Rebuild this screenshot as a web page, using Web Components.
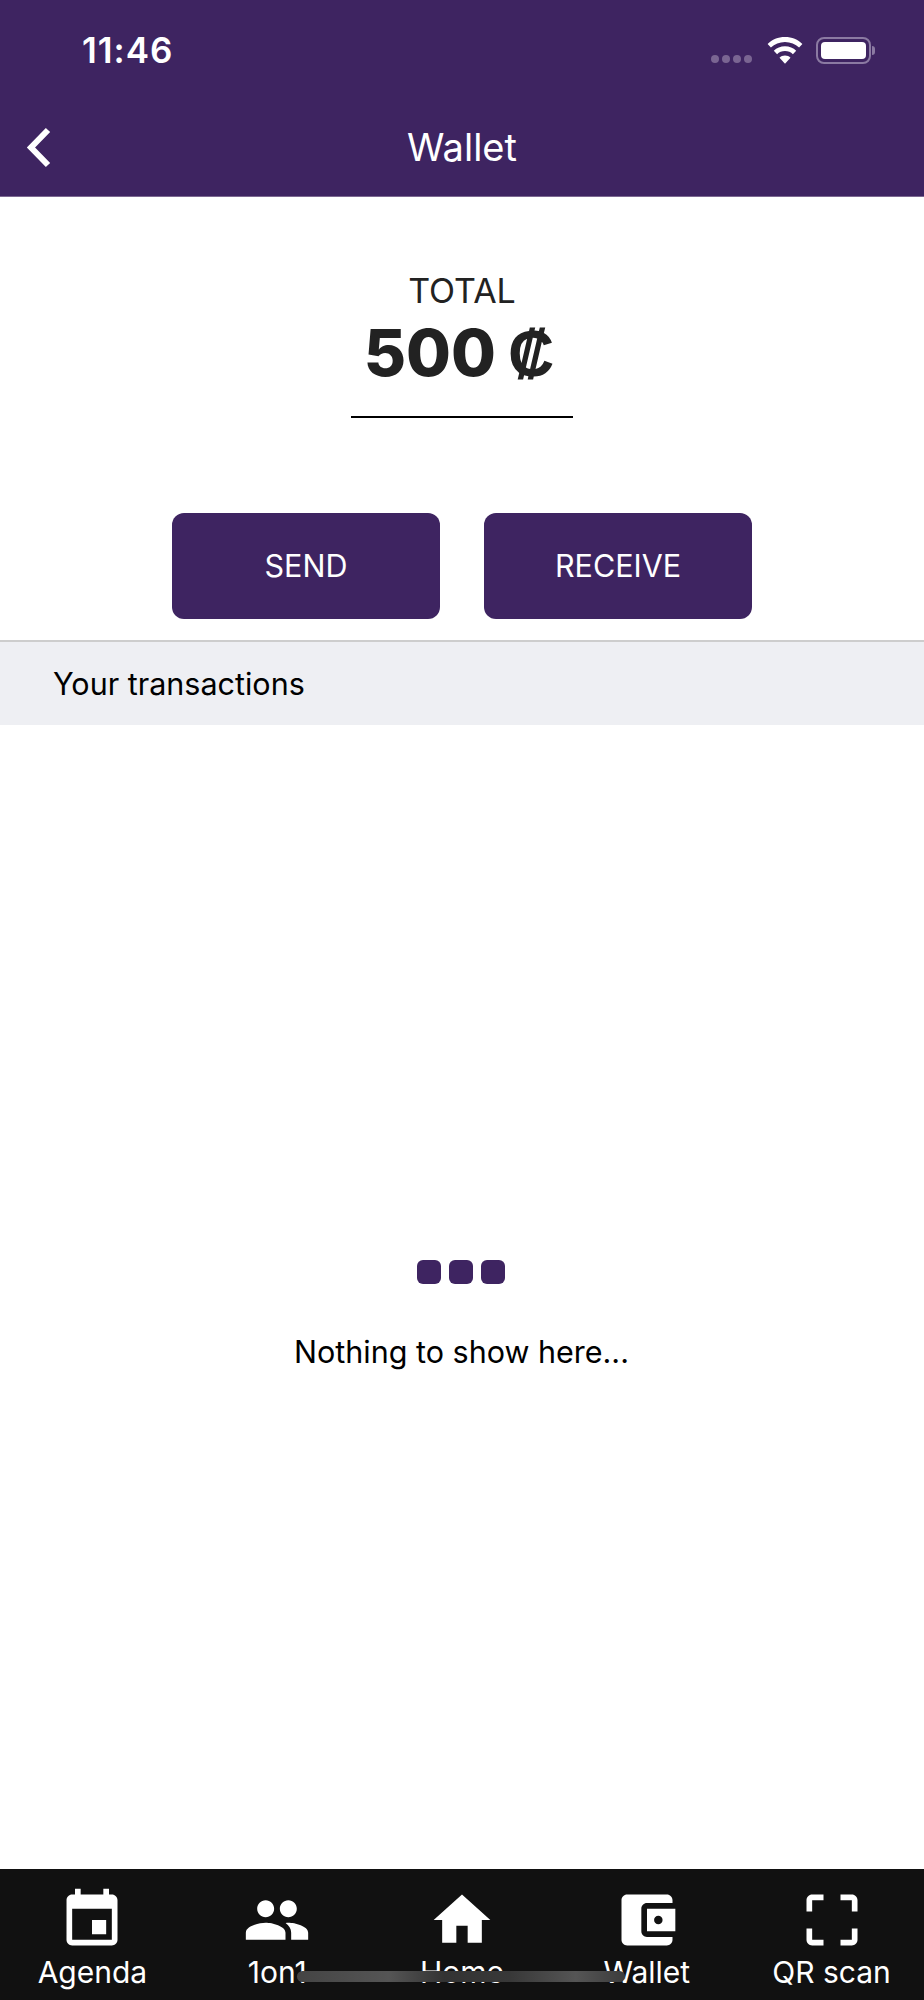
<!DOCTYPE html>
<html lang="en">
<head>
<meta charset="utf-8">
<title>Wallet</title>
<style>
	html, body {
		margin: 0;
		height: 2000px;
		background: #fff;
		font-family: "Inter", "Liberation Sans", sans-serif;
		overflow: hidden;
	}

	body {
		display: flex;
		flex-direction: column;
		position: relative;
	}

	empty-state {
		flex: 1;
	}
</style>
</head>
<body>
	<app-header title-text="Wallet"></app-header>
	<wallet-total amount="500" currency="₡"></wallet-total>
	<button-row>
		<wallet-button>SEND</wallet-button>
		<wallet-button>RECEIVE</wallet-button>
	</button-row>
	<section-bar>Your transactions</section-bar>
	<empty-state>Nothing to show here...</empty-state>
	<tab-bar>
		<tab-item icon="event">Agenda</tab-item>
		<tab-item icon="people">1on1</tab-item>
		<tab-item icon="home">Home</tab-item>
		<tab-item icon="wallet">Wallet</tab-item>
		<tab-item icon="scan">QR scan</tab-item>
	</tab-bar>
	<home-indicator></home-indicator>

<script>
	const ICONS = {
		event: "M17 12h-5v5h5v-5zM16 1v2H8V1H6v2H5c-1.11 0-1.99.9-1.99 2L3 19c0 1.1.89 2 2 2h14c1.1 0 2-.9 2-2V5c0-1.1-.9-2-2-2h-1V1h-2zm3 18H5V8h14v11z",
		people: "M16 11c1.66 0 2.99-1.34 2.99-3S17.66 5 16 5c-1.66 0-3 1.34-3 3s1.34 3 3 3zm-8 0c1.66 0 2.99-1.34 2.99-3S9.66 5 8 5C6.34 5 5 6.34 5 8s1.34 3 3 3zm0 2c-2.33 0-7 1.17-7 3.5V19h14v-2.5c0-2.33-4.67-3.5-7-3.5zm8 0c-.29 0-.62.02-.97.05 1.16.84 1.97 1.97 1.97 3.45V19h6v-2.5c0-2.33-4.67-3.5-7-3.5z",
		home: "M10 20v-6h4v6h5v-8h3L12 3 2 12h3v8z",
		wallet: "M21 18v1c0 1.1-.9 2-2 2H5c-1.11 0-2-.9-2-2V5c0-1.1.89-2 2-2h14c1.1 0 2 .9 2 2v1h-9c-1.11 0-2 .9-2 2v8c0 1.1.89 2 2 2h9zm-9-2h10V8H12v8zm4-2.5c-.83 0-1.5-.67-1.5-1.5s.67-1.5 1.5-1.5 1.5.67 1.5 1.5-.67 1.5-1.5 1.5z",
		scan: "M3 5v4h2V5h4V3H5c-1.1 0-2 .9-2 2zm2 10H3v4c0 1.1.9 2 2 2h4v-2H5v-4zm14 4h-4v2h4c1.1 0 2-.9 2-2v-4h-2v4zm0-16h-4v2h4v4h2V5c0-1.1-.9-2-2-2z",
	};

	class AppHeader extends HTMLElement {
		connectedCallback() {
			this.attachShadow({ mode: "open" });
			this.shadowRoot.innerHTML = /* HTML */ `
				<div class="status">
					<span class="time">11:46</span>
					<div class="signals">
						<div class="dots"><i></i><i></i><i></i><i></i></div>
						<svg width="36" height="27" viewBox="0 0 36 27" fill="#fff">
							<path d="M18 0C11 0 5 2.6 .6 7l3.300 3.600C7.600 7 12.500 4.900 18 4.900s10.400 2.100 14.100 5.700L35.400 7C31 2.600 25 0 18 0z"/>
							<path d="M18 9.200c-4.400 0-8.300 1.700-11.200 4.500l3.300 3.600c2-2 4.800-3.200 7.900-3.200s5.900 1.200 7.900 3.200l3.300-3.600C26.300 10.900 22.400 9.200 18 9.200z"/>
							<path d="M18 18.400c-2.200 0-4.100.9-5.500 2.300L18 26.700l5.500-6C22.100 19.300 20.200 18.400 18 18.400z"/>
						</svg>
						<div class="battery"><b></b></div>
						<div class="nub"></div>
					</div>
				</div>
				<div class="bar">
					<svg class="back" width="30" height="46" viewBox="0 0 30 46">
						<path d="M24 5 7 22.500 24 40" fill="none" stroke="#fff" stroke-width="6"/>
					</svg>
					<span class="title">${this.getAttribute("title-text")}</span>
				</div>

				<style>
					:host {
						display: block;
						background: #3e2461;
						color: #fff;
						height: 197px;
						box-sizing: border-box;
						border-bottom: 1px solid #7c6891;
					}

					.status {
						display: flex;
						justify-content: space-between;
						align-items: center;
						height: 100px;
						padding: 0 49px 0 82px;
					}

					.time {
						font-size: 35px;
						font-weight: 600;
						letter-spacing: 1px;
					}

					.signals {
						display: flex;
						align-items: center;
					}

					.dots {
						display: flex;
						gap: 3px;
						margin: 18px 15px 0 0;
					}

					.dots i {
						width: 8px;
						height: 8px;
						border-radius: 50%;
						background: #7a6592;
					}

					.battery {
						box-sizing: border-box;
						width: 55px;
						height: 27px;
						margin-left: 13px;
						padding: 3px;
						border: 2px solid #8b7aa2;
						border-radius: 8px;
					}

					.battery b {
						display: block;
						height: 100%;
						background: #fff;
						border-radius: 4px;
					}

					.nub {
						width: 3px;
						height: 9px;
						margin-left: 1px;
						background: #8b7aa2;
						border-radius: 0 3px 3px 0;
					}

					.bar {
						display: flex;
						align-items: center;
						justify-content: center;
						height: 94px;
						position: relative;
					}

					.back {
						position: absolute;
						left: 24px;
						top: 25px;
					}

					.title {
						font-size: 38px;
					}
				</style>
			`;
		}
	}

	class WalletTotal extends HTMLElement {
		connectedCallback() {
			this.attachShadow({ mode: "open" });
			this.shadowRoot.innerHTML = /* HTML */ `
				<div class="box">
					<div class="label">TOTAL</div>
					<div class="amount">${this.getAttribute("amount")}<span>${this.getAttribute("currency")}</span></div>
				</div>

				<style>
					:host {
						display: flex;
						justify-content: center;
						padding-top: 72px;
					}

					.box {
						width: 222px;
						height: 147px;
						border-bottom: 2px solid #000;
						text-align: center;
						color: #222;
					}

					.label {
						font-size: 34px;
						line-height: 44px;
					}

					.amount {
						font-weight: 800;
						font-size: 65px;
						line-height: 80px;
					}

					.amount span {
						font-family: "Liberation Sans", Arial, sans-serif;
						font-weight: 700;
						font-size: 64px;
						margin: 0 6px 0 12px;
					}
				</style>
			`;
		}
	}

	class ButtonRow extends HTMLElement {
		connectedCallback() {
			this.attachShadow({ mode: "open" });
			this.shadowRoot.innerHTML = /* HTML */ `
				<slot></slot>
				<style>
					:host {
						display: flex;
						justify-content: center;
						gap: 44px;
						padding: 95px 0 21px;
					}
				</style>
			`;
		}
	}

	class WalletButton extends HTMLElement {
		connectedCallback() {
			this.attachShadow({ mode: "open" });
			this.shadowRoot.innerHTML = /* HTML */ `
				<slot></slot>
				<style>
					:host {
						display: flex;
						align-items: center;
						justify-content: center;
						box-sizing: border-box;
						width: 268px;
						height: 106px;
						padding-bottom: 2px;
						background: #3e2461;
						border-radius: 12px;
						color: #fff;
						font-size: 30.500px;
					}
				</style>
			`;
		}
	}

	class SectionBar extends HTMLElement {
		connectedCallback() {
			this.attachShadow({ mode: "open" });
			this.shadowRoot.innerHTML = /* HTML */ `
				<slot></slot>
				<style>
					:host {
						display: flex;
						align-items: center;
						height: 85px;
						box-sizing: border-box;
						padding-left: 53px;
						background: #eeeff3;
						border-top: 2px solid #cdcdcd;
						color: #000;
						font-size: 30.500px;
					}
				</style>
			`;
		}
	}

	class EmptyState extends HTMLElement {
		connectedCallback() {
			this.attachShadow({ mode: "open" });
			this.shadowRoot.innerHTML = /* HTML */ `
				<div class="dots"><i></i><i></i><i></i></div>
				<div class="text"><slot></slot></div>
				<style>
					:host {
						display: flex;
						flex-direction: column;
						align-items: center;
						padding-top: 535px;
						box-sizing: border-box;
						color: #000;
						font-size: 30.500px;
					}

					.dots {
						display: flex;
						gap: 8px;
						margin-right: 2px;
					}

					.dots i {
						width: 24px;
						height: 24px;
						border-radius: 6px;
						background: #3e2461;
					}

					.text {
						margin-top: 49px;
						margin-right: 1px;
					}
				</style>
			`;
		}
	}

	class TabBar extends HTMLElement {
		connectedCallback() {
			this.attachShadow({ mode: "open" });
			this.shadowRoot.innerHTML = /* HTML */ `
				<slot></slot>
				<style>
					:host {
						display: grid;
						grid-template-columns: repeat(5, 1fr);
						height: 131px;
						box-sizing: border-box;
						background: #111;
						padding-top: 17px;
					}
				</style>
			`;
		}
	}

	class TabItem extends HTMLElement {
		connectedCallback() {
			this.attachShadow({ mode: "open" });
			this.shadowRoot.innerHTML = /* HTML */ `
				<svg width="68" height="68" viewBox="0 0 24 24" fill="#fff"><path d="${ICONS[this.getAttribute("icon")]}"/></svg>
				<span><slot></slot></span>
				<style>
					:host {
						display: flex;
						flex-direction: column;
						align-items: center;
						color: #fff;
						font-size: 30px;
					}

					svg {
						display: block;
					}

					span {
						line-height: 36px;
					}
				</style>
			`;
		}
	}

	class HomeIndicator extends HTMLElement {
		connectedCallback() {
			this.attachShadow({ mode: "open" });
			this.shadowRoot.innerHTML = /* HTML */ `
				<style>
					/* sits over the tab labels */
					:host {
						position: absolute;
						left: 297px;
						top: 1971px;
						width: 328px;
						height: 11px;
						border-radius: 6px;
						background: linear-gradient(90deg, #444, #555 28%, #333 45%, #383838 65%, #555 85%, #3c3c3c);
					}
				</style>
			`;
		}
	}

	customElements.define("app-header", AppHeader);
	customElements.define("wallet-total", WalletTotal);
	customElements.define("button-row", ButtonRow);
	customElements.define("wallet-button", WalletButton);
	customElements.define("section-bar", SectionBar);
	customElements.define("empty-state", EmptyState);
	customElements.define("tab-bar", TabBar);
	customElements.define("tab-item", TabItem);
	customElements.define("home-indicator", HomeIndicator);
</script>
</body>
</html>
